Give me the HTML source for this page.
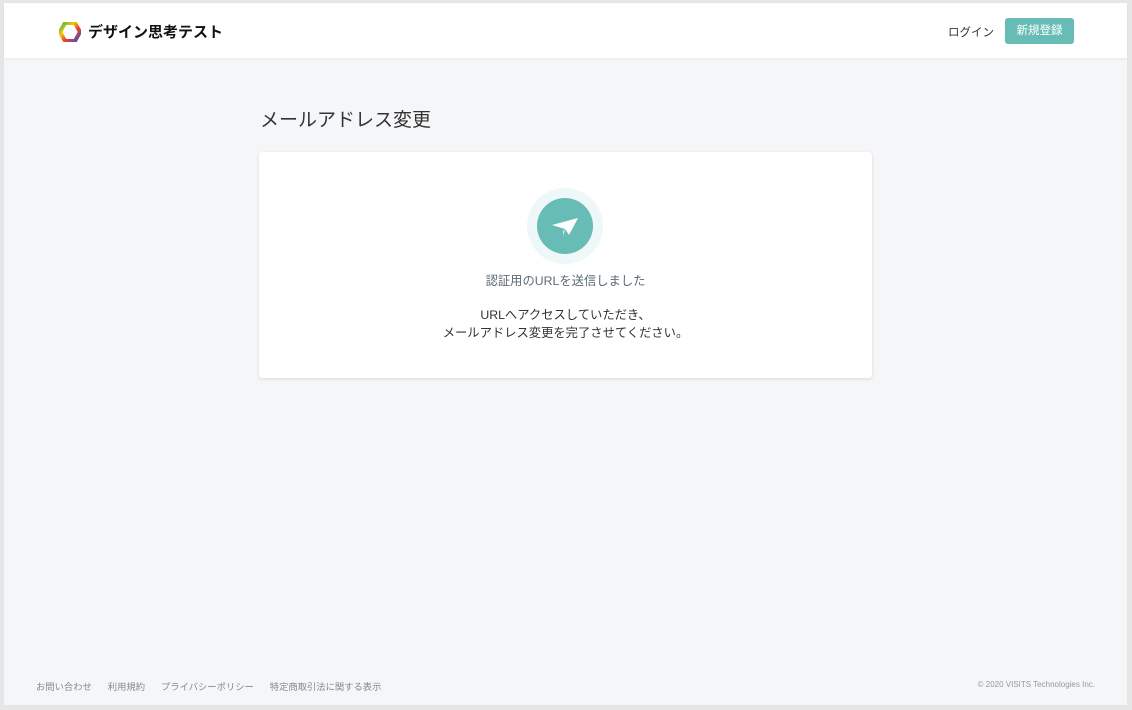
<!DOCTYPE html>
<html><head><meta charset="utf-8"><style>
*{margin:0;padding:0;box-sizing:border-box}
body{width:1132px;height:710px;background:#e6e6e6;font-family:"Liberation Sans","Noto Sans CJK JP",sans-serif;overflow:hidden}
.page{position:absolute;left:4px;top:3px;width:1123px;height:702px;background:#f5f6f8}
.hdr{position:absolute;left:0;top:0;width:100%;height:55px;background:#fff;box-shadow:0 1px 3px rgba(0,0,0,.06)}
.logo{position:absolute;left:55px;top:18px;display:flex;align-items:center;font-size:15px;font-weight:bold;color:#111}
.logo svg{margin-right:7px}
.login{position:absolute;left:944px;top:21px;font-size:11.5px;color:#333}
.btn{position:absolute;left:1001px;top:15px;width:69px;height:26px;background:#67bdb5;border-radius:3px;color:#fff;font-size:11.5px;text-align:center;line-height:26px}
h1{position:absolute;left:256px;top:102px;font-size:19px;font-weight:normal;color:#333}
.card{position:absolute;left:255px;top:149px;width:613px;height:226px;background:#fff;border-radius:3px;box-shadow:0 1px 3px rgba(0,0,0,.12)}
.oc{position:absolute;left:268px;top:36px;width:76px;height:76px;border-radius:50%;background:#eef8f8}
.ic{position:absolute;left:10px;top:10px;width:56px;height:56px;border-radius:50%;background:#67bdb5}
.t1{position:absolute;left:0;width:100%;top:119px;text-align:center;font-size:12.3px;color:#5a6b75}
.t2{position:absolute;left:0;width:100%;top:154px;text-align:center;font-size:12.3px;color:#333;line-height:18px}
.foot{position:absolute;left:32px;top:676px;font-size:9.3px;color:#888}
.foot span{margin-right:16px}
.copy{position:absolute;right:32px;top:677px;font-size:8px;color:#999}
</style></head><body><div class="page">
<div class="hdr">
<div class="logo"><svg width="22" height="20" viewBox="0 0 22 20"><polygon points="6,1 16,1 21,10 16,19 6,19 1,10" fill="none" stroke="url(#g)" stroke-width="4"/><defs><linearGradient id="g" x1="0" y1="0" x2="1" y2="1"><stop offset="0" stop-color="#3ab54a"/><stop offset=".35" stop-color="#f7c600"/><stop offset=".6" stop-color="#e8412c"/><stop offset="1" stop-color="#3a4fd0"/></linearGradient></defs></svg>デザイン思考テスト</div>
<div class="login">ログイン</div>
<div class="btn">新規登録</div>
</div>
<h1>メールアドレス変更</h1>
<div class="card">
<div class="oc"><div class="ic"><svg width="56" height="56" viewBox="0 0 56 56"><path d="M15 27 L41 20 L32 37 L28 31 Z" fill="#fff"/><path d="M28 31 L41 20 L26 33 L26 38 Z" fill="#e6f4f2"/></svg></div></div>
<div class="t1">認証用のURLを送信しました</div>
<div class="t2">URLへアクセスしていただき、<br>メールアドレス変更を完了させてください。</div>
</div>
<div class="foot"><span>お問い合わせ</span><span>利用規約</span><span>プライバシーポリシー</span><span>特定商取引法に関する表示</span></div>
<div class="copy">© 2020 VISITS Technologies Inc.</div>
</div></body></html>
